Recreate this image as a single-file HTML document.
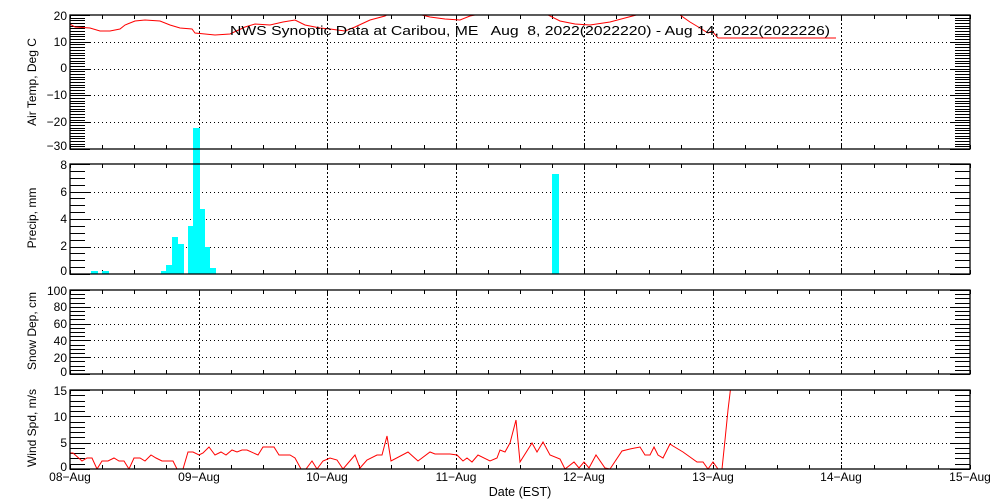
<!DOCTYPE html>
<html><head><meta charset="utf-8"><style>
html,body{margin:0;padding:0;background:#fff;width:1000px;height:500px;overflow:hidden}
svg{display:block}
text{font-family:"Liberation Sans",sans-serif;font-size:12px;fill:#000}
</style></head><body>
<svg id="s" width="1000" height="500" viewBox="0 0 1000 500" xmlns="http://www.w3.org/2000/svg">
<defs>
<clipPath id="c1"><rect x="70" y="15" width="900" height="134"/></clipPath>
<clipPath id="c4"><rect x="70" y="390" width="900" height="79"/></clipPath>
</defs>
<g id="grid" stroke="#000" stroke-width="1" fill="none"></g>
<g id="ticks" stroke="#000" stroke-width="1" fill="none"></g>
<polyline clip-path="url(#c1)" fill="none" stroke="#f00" stroke-width="1" points="70,24 75,27 90,28 100,31 110,31 120,29 125,25 135,21 145,20 160,21 170,25 180,28 192,29 195,33 205,34 215,35 230,34 245,27 255,24 270,25 283,22 295,20 305,25 320,28 330,29 345,31 355,27 370,20 385,16 390,13 418,13 422,15 430,17 445,19 460,20 470,16 480,14 484,12 544,12 548,15 560,21 575,24 590,25 610,22 625,18 640,14 643,12 677,12 680,15 690,22 700,28 708,33 712,31 718,38 836,38"/>
<g fill="#00ffff">
<rect x="91" y="271" width="7" height="3"/>
<rect x="102" y="271" width="7" height="3"/>
<rect x="161" y="271" width="5" height="3"/>
<rect x="166" y="265" width="6" height="9"/>
<rect x="172" y="237" width="6" height="37"/>
<rect x="178" y="244" width="6" height="30"/>
<rect x="188" y="226" width="5" height="48"/>
<rect x="193" y="128" width="7" height="146"/>
<rect x="200" y="209" width="5" height="65"/>
<rect x="205" y="247" width="5" height="27"/>
<rect x="210" y="268" width="6" height="6"/>
<rect x="552" y="174" width="7" height="100"/>
</g>
<polyline clip-path="url(#c4)" fill="none" stroke="#f00" stroke-width="1" points="70,453 73,453 82,461 87,458 92,458 97,469 102,461 108,461 114,458 119,461 124,461 129,469 134,458 140,458 145,461 151,455 156,458 162,461 173,461 177,469 183,469 188,452 193,452 199,455 203,453 209,447 215,455 221,452 226,455 232,450 237,452 242,450 247,450 258,455 263,447 274,447 279,455 290,455 295,458 301,469 306,469 312,461 317,469 323,461 330,458 337,460 343,469 355,455 360,468 367,460 377,455 382,455 387,436 391,461 408,452 418,461 430,452 435,454 450,454 457,455 463,461 467,458 472,462 478,455 490,461 497,458 500,450 505,452 510,443 516,420 520,462 532,443 537,452 543,442 550,455 560,459 565,469 574,462 579,468 584,462 589,468 596,455 605,468 610,469 622,451 630,449 640,447 645,455 650,455 654,447 658,455 663,458 670,444 673,446 683,452 697,462 703,462 708,469 713,462 718,469 722,469 725,440 728,410 731,385"/>
<g id="frames" fill="none" stroke="#000" stroke-width="1.3">
<rect x="70" y="15" width="900" height="134"/>
<rect x="70" y="164" width="900" height="110"/>
<rect x="70" y="290" width="900" height="84"/>
<rect x="70" y="390" width="900" height="79"/>
</g>
<text x="230" y="35" textLength="600" lengthAdjust="spacingAndGlyphs" style="font-size:13px;white-space:pre" xml:space="preserve">NWS Synoptic Data at Caribou, ME   Aug  8, 2022(2022220) - Aug 14, 2022(2022226)</text>
<g text-anchor="end" style="font-size:12px">
<text x="67" y="20">20</text><text x="67" y="46">10</text><text x="67" y="72">0</text><text x="67" y="99">−10</text><text x="67" y="126">−20</text><text x="67" y="150">−30</text>
<text x="67" y="169">8</text><text x="67" y="196">6</text><text x="67" y="223">4</text><text x="67" y="250">2</text><text x="67" y="275">0</text>
<text x="67" y="295">100</text><text x="67" y="311">80</text><text x="67" y="328">60</text><text x="67" y="345">40</text><text x="67" y="362">20</text><text x="67" y="376">0</text>
<text x="67" y="395">15</text><text x="67" y="421">10</text><text x="67" y="447">5</text><text x="67" y="471">0</text>
</g>
<g text-anchor="middle" style="font-size:13px">
<text transform="translate(36,82) rotate(-90)">Air Temp, Deg C</text>
<text transform="translate(36,218) rotate(-90)">Precip, mm</text>
<text transform="translate(36,331) rotate(-90)">Snow Dep, cm</text>
<text transform="translate(36,428) rotate(-90)">Wind Spd, m/s</text>
</g>
<g text-anchor="middle" style="font-size:11.5px">
<text x="70" y="481">08−Aug</text><text x="199" y="481">09−Aug</text><text x="327" y="481">10−Aug</text><text x="456" y="481">11−Aug</text><text x="584" y="481">12−Aug</text><text x="713" y="481">13−Aug</text><text x="841" y="481">14−Aug</text><text x="970" y="481">15−Aug</text>
<text x="520" y="496" style="font-size:12.5px">Date (EST)</text>
</g>
</svg>
<script>
(function(){
var ns="http://www.w3.org/2000/svg";
var grid=document.getElementById('grid'),ticks=document.getElementById('ticks');
function line(g,x1,y1,x2,y2,dash){var l=document.createElementNS(ns,'line');l.setAttribute('x1',x1);l.setAttribute('y1',y1);l.setAttribute('x2',x2);l.setAttribute('y2',y2);if(dash)l.setAttribute('stroke-dasharray',dash);g.appendChild(l);}
var panels=[[15,149,50,10,1],[164,274,8,2,0.5],[290,374,100,20,5],[390,469,15,5,1]];
var day=900/7;
panels.forEach(function(p){
 var top=p[0],bot=p[1],range=p[2],maj=p[3],mn=p[4],h=bot-top;
 for(var v=0;v<=range+1e-6;v+=mn){
  var y=bot-v/range*h; y=Math.round(y)+0.5;
  var isMaj=Math.abs(v/maj-Math.round(v/maj))<1e-6;
  var len=isMaj?20:15;
  line(ticks,70,y,70+len,y);line(ticks,970,y,970-len,y);
  if(isMaj&&v>0&&v<range-1e-6) line(grid,90,y,950,y,'1 3');
 }
 for(var i=0;i<=28;i++){
  var x=Math.round(70+i*day/4)+0.5;
  line(ticks,x,top,x,top+4);line(ticks,x,bot,x,bot-4);
  if(i%4==0&&i>0&&i<28) line(grid,x,top,x,bot,'2 2');
 }
});
})();
</script>
</body></html>
